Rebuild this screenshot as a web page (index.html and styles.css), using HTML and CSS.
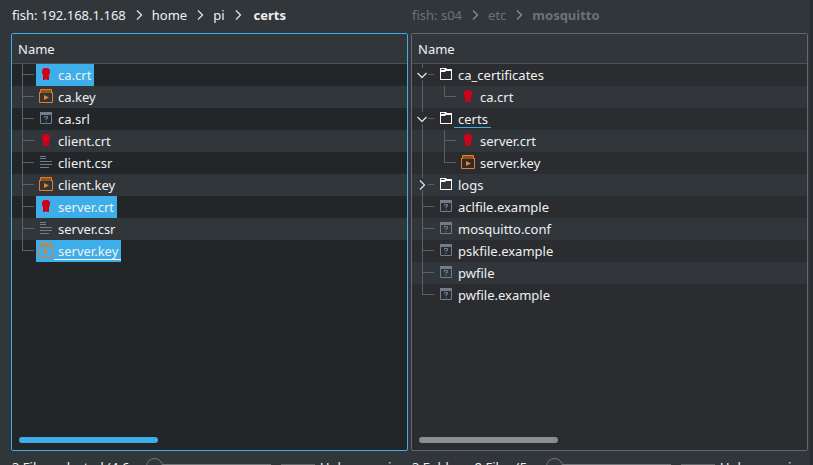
FILE: index.html
```
<!DOCTYPE html>
<html lang="en">
<head>
<meta charset="utf-8">
<title>certs</title>
<link rel="stylesheet" href="styles.css">
</head>
<body>
<svg class="defs" aria-hidden="true">
  <symbol id="cert" viewBox="0 0 16 16"><path fill="#d0021b" d="M6 2h4l2 2v3l-1 2v5h-2l-1-1-1 1H5V9L4 7V4z"/></symbol>
  <symbol id="key" viewBox="0 0 16 16"><path fill="#f67400" fill-opacity="0.500" d="M3 1h10l1 4H2z"/><path fill="none" stroke="#e87d25" d="M2.500 5V1.500h11V5M1.500 4v10.500h13V4"/><path fill="#f08020" d="M6 7v5l5-2.500z"/></symbol>
  <symbol id="unknown" viewBox="0 0 16 16"><path fill="#6f7d8c" d="M2 2h12v3H2z"/><path fill="none" stroke="#6f7d8c" d="M2.500 2.500h11v11h-11z"/><path fill="none" stroke="#6f7d8c" d="M6.500 8V6.500h3v2H8V10M8 11v1"/></symbol>
  <symbol id="text" viewBox="0 0 16 16"><path fill="none" stroke="#6f7d8c" d="M2 2.500h6M2 4.500h6M2 7.500h12M2 10.500h12M2 13.500h9"/></symbol>
  <symbol id="folder" viewBox="0 0 16 16"><path fill="#fcfcfc" fill-rule="evenodd" d="M2 2h6l1 1h5v11H2zM3 6v7h10V5H8L7 6zM3 3v1h3l1-1z"/></symbol>
  <symbol id="chevron" viewBox="0 0 16 16"><path fill="none" stroke="#dfe0e1" stroke-width="1.300" d="M6 3.500 10.500 8 6 12.500"/></symbol>
</svg>
<main class="panes">
  <section class="pane active">
    <nav class="crumbs"><a href="#">fish: 192.168.1.168</a><svg><use href="#chevron"/></svg><a href="#">home</a><svg><use href="#chevron"/></svg><a href="#">pi</a><svg><use href="#chevron"/></svg><a href="#" class="current">certs</a></nav>
    <div class="view">
      <div class="head">Name</div>
      <ul class="tree">
        <li><i class="branch"></i><span class="item selected"><svg><use href="#cert"/></svg><span>ca.crt</span></span></li>
        <li><i class="branch"></i><span class="item"><svg><use href="#key"/></svg><span>ca.key</span></span></li>
        <li><i class="branch"></i><span class="item"><svg><use href="#unknown"/></svg><span>ca.srl</span></span></li>
        <li><i class="branch"></i><span class="item"><svg><use href="#cert"/></svg><span>client.crt</span></span></li>
        <li><i class="branch"></i><span class="item"><svg><use href="#text"/></svg><span>client.csr</span></span></li>
        <li><i class="branch"></i><span class="item"><svg><use href="#key"/></svg><span>client.key</span></span></li>
        <li><i class="branch"></i><span class="item selected"><svg><use href="#cert"/></svg><span>server.crt</span></span></li>
        <li><i class="branch"></i><span class="item"><svg><use href="#text"/></svg><span>server.csr</span></span></li>
        <li><i class="branch last"></i><span class="item selected focus"><svg><use href="#key"/></svg><span>server.key</span></span></li>
      </ul>
      <div class="scroll"><div class="thumb"></div></div>
    </div>
    <footer class="status"><span class="summary">3 Files selected (4.6</span><input type="range" min="0" max="100" value="0" aria-label="Zoom"><span class="capacity"></span><span class="free">Unknown size</span></footer>
  </section>
  <section class="pane">
    <nav class="crumbs"><a href="#">fish: s04</a><svg><use href="#chevron"/></svg><a href="#">etc</a><svg><use href="#chevron"/></svg><a href="#" class="current">mosquitto</a></nav>
    <div class="view">
      <div class="head">Name</div>
      <ul class="tree">
        <li><i class="branch parent"><svg class="open"><use href="#chevron"/></svg></i><span class="item"><svg><use href="#folder"/></svg><span>ca_certificates</span></span></li>
        <li><i class="branch through"></i><i class="branch last"></i><span class="item"><svg><use href="#cert"/></svg><span>ca.crt</span></span></li>
        <li><i class="branch parent"><svg class="open"><use href="#chevron"/></svg></i><span class="item focus"><svg><use href="#folder"/></svg><span>certs</span></span></li>
        <li><i class="branch through"></i><i class="branch"></i><span class="item"><svg><use href="#cert"/></svg><span>server.crt</span></span></li>
        <li><i class="branch through"></i><i class="branch last"></i><span class="item"><svg><use href="#key"/></svg><span>server.key</span></span></li>
        <li><i class="branch parent"><svg><use href="#chevron"/></svg></i><span class="item"><svg><use href="#folder"/></svg><span>logs</span></span></li>
        <li><i class="branch"></i><span class="item"><svg><use href="#unknown"/></svg><span>aclfile.example</span></span></li>
        <li><i class="branch"></i><span class="item"><svg><use href="#unknown"/></svg><span>mosquitto.conf</span></span></li>
        <li><i class="branch"></i><span class="item"><svg><use href="#unknown"/></svg><span>pskfile.example</span></span></li>
        <li><i class="branch"></i><span class="item"><svg><use href="#unknown"/></svg><span>pwfile</span></span></li>
        <li><i class="branch last"></i><span class="item"><svg><use href="#unknown"/></svg><span>pwfile.example</span></span></li>
      </ul>
      <div class="scroll"><div class="thumb"></div></div>
    </div>
    <footer class="status"><span class="summary">3 Folders, 8 Files (5</span><input type="range" min="0" max="100" value="0" aria-label="Zoom"><span class="capacity"></span><span class="free">Unknown size</span></footer>
  </section>
</main>
</body>
</html>
```
FILE: styles.css
```
* { box-sizing: border-box; }
body {
  margin: 0;
  height: 100vh;
  overflow: hidden;
  background: #31363b;
  color: #eff0f1;
  font: 13px/22px "Noto Sans", sans-serif;
}
svg { width: 16px; height: 16px; flex: none; display: block; }
.defs { position: absolute; width: 0; height: 0; }
.panes {
  height: 100%;
  display: grid;
  grid-template-columns: 1fr 1fr;
  gap: 3px;
  padding: 0 2px 0 11px;
  border-right: 3px solid #2a2e32;
}
.pane { display: flex; flex-direction: column; min-width: 0; }
.crumbs {
  display: flex;
  align-items: center;
  gap: 5px;
  height: 33px;
  padding: 0 1px 4px;
}
.crumbs a { color: inherit; text-decoration: none; }
.crumbs .current { font-weight: 700; margin-left: 3px; }
.pane:not(.active) .crumbs { color: #6e7275; }
.pane:not(.active) .crumbs .current { margin-left: 0; }
.pane:not(.active) .crumbs svg { opacity: 0.5; }
.view {
  flex: 1;
  display: flex;
  flex-direction: column;
  border: 1px solid #65686b;
  border-radius: 2px;
  background: #2a2c30;
}
.active .view { border-color: #3daee9; background: #232629; }
.head {
  height: 30px;
  padding: 4px 6px;
  border-bottom: 1px solid #4d5155;
  background: #31363b;
}
.tree { flex: 1; margin: 0; padding: 0; list-style: none; }
.tree li { display: flex; height: 22px; padding-left: 2px; }
.tree li:nth-child(even) { background: #31363b; }
.branch {
  width: 22px;
  display: grid;
  background:
    linear-gradient(#5c6063, #5c6063) 8px 0 / 1px 100% no-repeat,
    linear-gradient(#5c6063, #5c6063) 8px 10px / 12px 1px no-repeat;
}
.branch.last { background-size: 1px 10px, 12px 1px; }
.branch.through { background-size: 1px 100%, 0 0; }
.branch.parent {
  background:
    linear-gradient(#5c6063, #5c6063) 8px 0 / 1px 4px no-repeat,
    linear-gradient(#5c6063, #5c6063) 8px 16px / 1px 6px no-repeat,
    linear-gradient(#5c6063, #5c6063) 14px 10px / 6px 1px no-repeat;
}
.branch svg { margin-top: 3px; }
.branch .open { transform: rotate(90deg); }
.item { display: flex; padding-left: 2px; }
.item svg { margin-top: 2px; }
.item > span { padding: 0 3px 0 4px; }
.item.selected { background: #3daee9; }
.item.focus > span { height: 20px; border-bottom: 1px solid #3daee9; }
.item.selected.focus > span { border-color: #fcfcfc; }
.scroll { padding: 0 7px 7px; }
.thumb { width: 36.5%; height: 6px; border-radius: 3px; background: #8b8d8f; }
.active .thumb { background: #3daee9; }
.status {
  height: 14px;
  display: flex;
  align-items: flex-start;
  padding: 5px 0 0 1px;
  overflow: hidden;
}
.summary { width: 134px; white-space: nowrap; }
.status input {
  appearance: none;
  width: 125px;
  height: 17px;
  margin: 2px 0 0;
  background: linear-gradient(#76797c, #76797c) 9px 6px / 116px 1px no-repeat;
}
.status input::-webkit-slider-thumb {
  appearance: none;
  width: 17px;
  height: 17px;
  border: 1px solid #76797c;
  border-radius: 50%;
  background: #31363b;
}
.capacity { width: 34px; height: 1px; margin: 8px 5px 0 10px; background: #65686b; }
.free { white-space: nowrap; }
```
